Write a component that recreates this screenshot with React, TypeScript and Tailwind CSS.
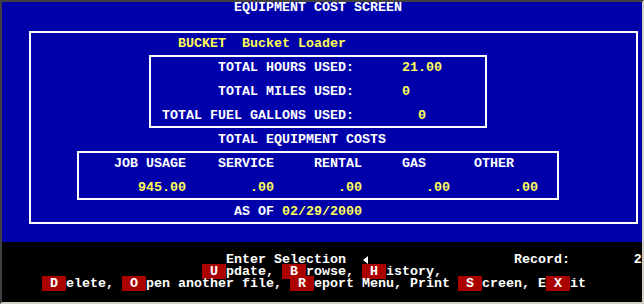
import React from "react";

const sp = (n: number) => " ".repeat(n);

// one 8x12 text cell row
function Row({ children, className = "" }: { children?: React.ReactNode; className?: string }) {
  return <div className={`h-[12px] leading-[12px] whitespace-pre ${className}`}>{children}</div>;
}

function Key({ k }: { k: string }) {
  return <span className="bg-[#aa0000] text-white">{` ${k} `}</span>;
}

export default function App() {
  return (
    <div
      className="w-[644px] h-[304px] border-l-2 border-t-2 border-l-[#404040] border-t-[#404040] border-r-2 border-b-2 border-r-[#d4d0c8] border-b-[#d4d0c8] bg-black text-white font-bold text-[13.3333px]"
      style={{ fontFamily: '"Liberation Mono", "DejaVu Sans Mono", monospace' }}
    >
      {/* BLUE SCREEN */}
      <div className="h-[240px] bg-[#0000aa] flex flex-col">
        <Row className="pl-[232px]">EQUIPMENT COST SCREEN</Row>

        {/* outer box */}
        <div className="mt-[17px] ml-[27px] w-[609px] h-[193px] border-2 border-white flex flex-col">
          <Row className="mt-[5px] pl-[147px] text-[#ffff55]">{"BUCKET" + sp(2) + "Bucket Loader"}</Row>

          {/* hours box */}
          <div className="mt-[5px] ml-[118px] w-[338px] h-[73px] border-2 border-white pt-[5px] pl-[3px] flex flex-col gap-[12px]">
            <Row>
              {sp(8) + "TOTAL HOURS USED:" + sp(6)}
              <span className="text-[#ffff55]">21.00</span>
            </Row>
            <Row>
              {sp(8) + "TOTAL MILES USED:" + sp(6)}
              <span className="text-[#ffff55]">0</span>
            </Row>
            <Row>
              {sp(1) + "TOTAL FUEL GALLONS USED:" + sp(8)}
              <span className="text-[#ffff55]">0</span>
            </Row>
          </div>

          <Row className="mt-[6px] pl-[187px]">TOTAL EQUIPMENT COSTS</Row>

          {/* costs box */}
          <div className="mt-[5px] ml-[46px] w-[482px] h-[49px] border-2 border-white pt-[5px] pl-[3px] flex flex-col gap-[12px]">
            <Row>{sp(4) + "JOB USAGE" + sp(4) + "SERVICE" + sp(5) + "RENTAL" + sp(5) + "GAS" + sp(6) + "OTHER"}</Row>
            <Row className="text-[#ffff55]">
              {sp(7) + "945.00" + sp(8) + ".00" + sp(8) + ".00" + sp(8) + ".00" + sp(8) + ".00"}
            </Row>
          </div>

          <Row className="mt-[6px] pl-[203px]">
            {"AS OF "}
            <span className="text-[#ffff55]">02/29/2000</span>
          </Row>
        </div>
      </div>

      {/* MENU AREA */}
      <div className="h-[60px] flex flex-col pt-[12px]">
        <Row>
          {sp(28) + "Enter Selection" + sp(2)}
          <svg width="8" height="12" viewBox="0 0 8 12" className="inline-block align-top">
            <polygon points="1,6 6,2 6,10" fill="#ffffff" />
          </svg>
          {sp(18) + "Record:" + sp(8) + "2"}
        </Row>
        <Row>
          {sp(25)}
          <Key k="U" />
          {"pdate, "}
          <Key k="B" />
          {"rowse, "}
          <Key k="H" />
          {"istory,"}
        </Row>
        <Row>
          {sp(5)}
          <Key k="D" />
          {"elete, "}
          <Key k="O" />
          {"pen another file, "}
          <Key k="R" />
          {"eport Menu, Print "}
          <Key k="S" />
          {"creen, E"}
          <Key k="X" />
          {"it"}
        </Row>
      </div>
    </div>
  );
}
